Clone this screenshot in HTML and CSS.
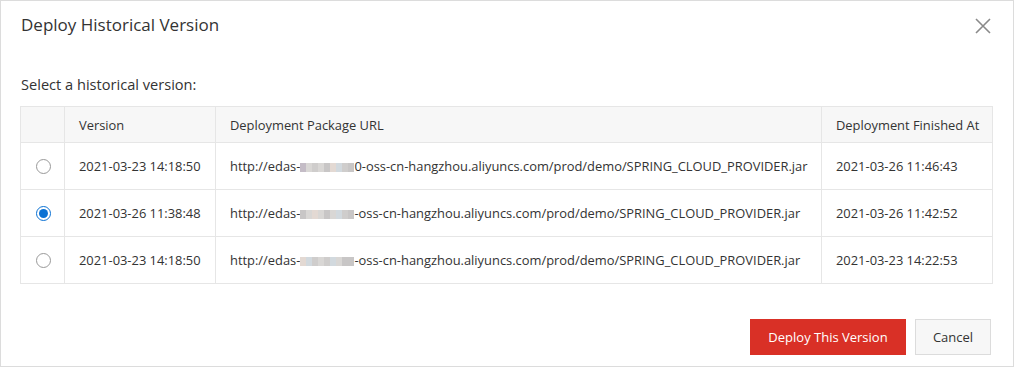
FILE: index.html
```html
<!DOCTYPE html>
<html>
<head>
<meta charset="utf-8">
<link rel="stylesheet" href="styles.css">
</head>
<body>
<div class="dialog">
  <div class="dlg-header">
    <h1 class="dlg-title">Deploy Historical Version</h1>
    <button class="close" aria-label="Close">
      <svg width="16" height="16" viewBox="0 0 16 16"><path d="M1 1 L15 15 M15 1 L1 15" stroke="#8a8a8a" stroke-width="1.6" fill="none"/></svg>
    </button>
  </div>
  <div class="dlg-body">
    <p class="label">Select a historical version:</p>
    <table class="tbl">
      <colgroup>
        <col class="c-radio"><col class="c-ver"><col class="c-url"><col class="c-fin">
      </colgroup>
      <thead>
        <tr><th></th><th>Version</th><th>Deployment Package URL</th><th>Deployment Finished At</th></tr>
      </thead>
      <tbody>
        <tr>
          <td class="rc"><span class="radio"></span></td>
          <td>2021-03-23 14:18:50</td>
          <td>http://edas-<span class="blur"><i class="p1"></i><i class="p2"></i><i class="p3"></i><i class="p2"></i><i class="p4"></i><i class="p5"></i><i class="p6"></i><i class="p3"></i><i class="p4"></i></span>0-oss-cn-hangzhou.aliyuncs.com/prod/demo/SPRING_CLOUD_PROVIDER.jar</td>
          <td>2021-03-26 11:46:43</td>
        </tr>
        <tr>
          <td class="rc"><span class="radio checked"></span></td>
          <td>2021-03-26 11:38:48</td>
          <td>http://edas-<span class="blur"><i class="p4"></i><i class="p2"></i><i class="p5"></i><i class="p2"></i><i class="p4"></i><i class="p2"></i><i class="p6"></i><i class="p3"></i><i class="p4"></i></span>-oss-cn-hangzhou.aliyuncs.com/prod/demo/SPRING_CLOUD_PROVIDER.jar</td>
          <td>2021-03-26 11:42:52</td>
        </tr>
        <tr>
          <td class="rc"><span class="radio"></span></td>
          <td>2021-03-23 14:18:50</td>
          <td>http://edas-<span class="blur"><i class="p5"></i><i class="p6"></i><i class="p3"></i><i class="p2"></i><i class="p3"></i><i class="p6"></i><i class="p2"></i><i class="p4"></i><i class="p4"></i></span>-oss-cn-hangzhou.aliyuncs.com/prod/demo/SPRING_CLOUD_PROVIDER.jar</td>
          <td>2021-03-23 14:22:53</td>
        </tr>
      </tbody>
    </table>
  </div>
  <div class="dlg-footer">
    <button class="btn primary">Deploy This Version</button>
    <button class="btn normal">Cancel</button>
  </div>
</div>
</body>
</html>
```

FILE: styles.css
```css
* { box-sizing: border-box; }
html, body { margin: 0; padding: 0; background: #fff; }
body {
  font-family: "Open Sans", "Noto Sans", sans-serif;
  color: #333;
}
.dialog {
  width: 1014px;
  height: 367px;
  border: 1px solid #dcdcdc;
  background: #fff;
  display: flex;
  flex-direction: column;
}
.dlg-header {
  display: flex;
  align-items: center;
  justify-content: space-between;
  height: 47px;
  padding: 0 22px 0 20px;
}
.dlg-title {
  margin: 0;
  font-size: 17px;
  font-weight: 400;
  color: #333;
}
.close {
  border: 0;
  background: none;
  padding: 0;
  width: 16px;
  height: 16px;
  margin-top: 2px;
  display: block;
  cursor: pointer;
}
.close svg { display: block; }
.dlg-body {
  padding: 26px 20px 0 19px;
}
.label {
  margin: 0 0 11px 1px;
  font-size: 14.6px;
  line-height: 21px;
}
.tbl {
  border-collapse: collapse;
  width: 972px;
  table-layout: fixed;
  font-size: 12.9px;
}
.c-radio { width: 44px; }
.c-ver { width: 151px; }
.c-url { width: 606px; }
.c-fin { width: 171px; }
.tbl th, .tbl td {
  border: 1px solid #e6e6e6;
  text-align: left;
  padding: 0 14px;
  white-space: nowrap;
  overflow: hidden;
}
.tbl th {
  background: #f7f7f7;
  font-weight: 400;
  height: 36px;
  color: #333;
}
.tbl td { height: 47px; }
.tbl td.rc { padding: 0 0 0 15px; }
.radio {
  display: block;
  width: 15px;
  height: 15px;
  border: 1px solid #999;
  border-radius: 50%;
  background: #fff;
  position: relative;
}
.radio.checked { border-color: #0b72d4; }
.radio.checked::after {
  content: "";
  position: absolute;
  left: 2px; top: 2px;
  width: 9px; height: 9px;
  border-radius: 50%;
  background: #0b72d4;
}
.blur {
  display: inline-flex;
  vertical-align: -1px;
  height: 9px;
}
.blur i { display: block; width: 6px; height: 9px; }
.p1 { background: #c4bcc6; }
.p2 { background: #d9d7d5; }
.p3 { background: #cfcdcc; }
.p4 { background: #c8c6c6; }
.p5 { background: #e3d9d3; }
.p6 { background: #d2d9de; }
.dlg-footer {
  margin-top: auto;
  display: flex;
  justify-content: flex-end;
  gap: 9px;
  padding: 0 22px 11px 0;
}
.btn {
  height: 36px;
  font-family: inherit;
  font-size: 13px;
  border-radius: 0;
  cursor: pointer;
}
.btn.primary {
  width: 156px;
  background: #d93026;
  border: 1px solid #d93026;
  color: #fff;
}
.btn.normal {
  width: 76px;
  background: #f7f7f7;
  border: 1px solid #dcdcdc;
  color: #333;
}
```
